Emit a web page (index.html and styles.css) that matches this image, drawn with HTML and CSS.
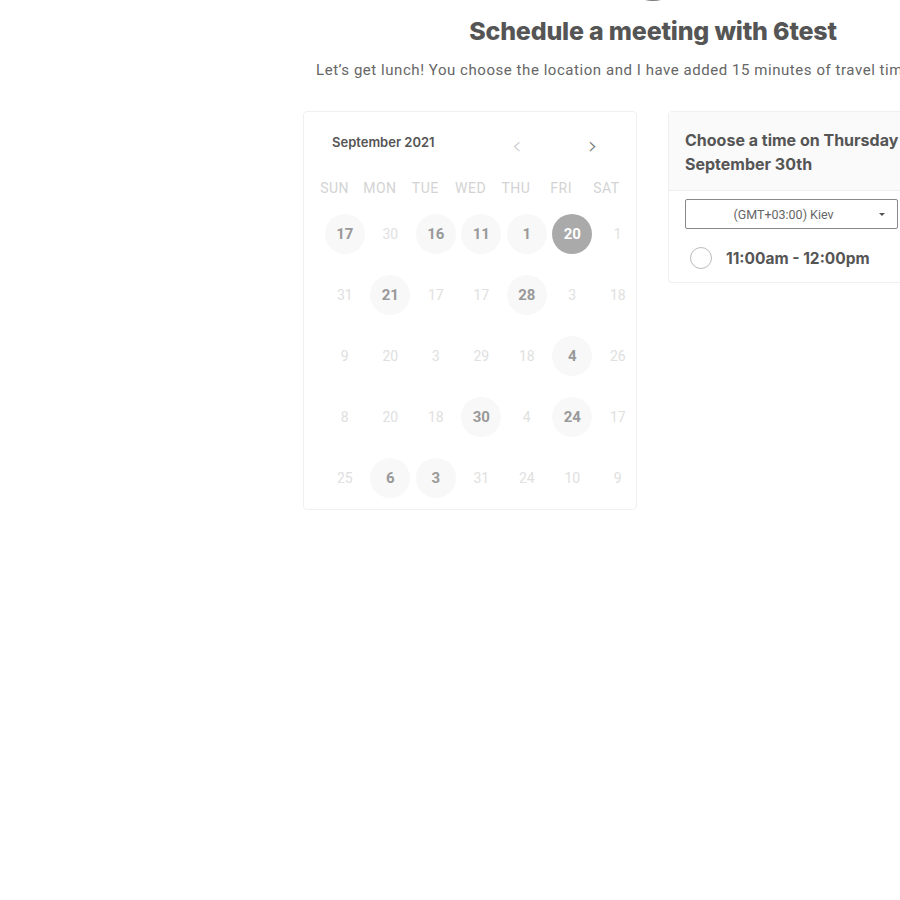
FILE: index.html
```html
<!DOCTYPE html>
<html>
<head>
<meta charset="utf-8">
<link rel="stylesheet" href="styles.css">
</head>
<body>
<div class="page">
  <div class="container">
    <div class="avatar"></div>
    <h1 class="title">Schedule a meeting with 6test</h1>
    <p class="subtitle">Let’s get lunch! You choose the location and I have added 15 minutes of travel time</p>
    <div class="panels">
      <div class="calendar">
        <div class="cal-head">
          <span class="month">September 2021</span>
          <span class="nav prev">&lsaquo;</span>
          <span class="nav next">&rsaquo;</span>
        </div>
        <div class="weekdays">
          <span>SUN</span><span>MON</span><span>TUE</span><span>WED</span><span>THU</span><span>FRI</span><span>SAT</span>
        </div>
        <div class="days">
          <span class="day on">17</span><span class="day">30</span><span class="day on">16</span><span class="day on">11</span><span class="day on">1</span><span class="day sel">20</span><span class="day">1</span>
          <span class="day">31</span><span class="day on">21</span><span class="day">17</span><span class="day">17</span><span class="day on">28</span><span class="day">3</span><span class="day">18</span>
          <span class="day">9</span><span class="day">20</span><span class="day">3</span><span class="day">29</span><span class="day">18</span><span class="day on">4</span><span class="day">26</span>
          <span class="day">8</span><span class="day">20</span><span class="day">18</span><span class="day on">30</span><span class="day">4</span><span class="day on">24</span><span class="day">17</span>
          <span class="day">25</span><span class="day on">6</span><span class="day on">3</span><span class="day">31</span><span class="day">24</span><span class="day">10</span><span class="day">9</span>
        </div>
      </div>
      <div class="times">
        <div class="times-head">Choose a time on Thursday<br>September 30th</div>
        <div class="times-body">
          <div class="select"><span class="select-text">(GMT+03:00) Kiev</span><span class="caret"></span></div>
          <label class="slot"><span class="radio"></span><span class="slot-text">11:00am - 12:00pm</span></label>
        </div>
      </div>
    </div>
  </div>
</div>
</body>
</html>
```

FILE: styles.css
```css
html, body {
  margin: 0;
  padding: 0;
  background: #fff;
  overflow: hidden;
}
body {
  font-family: Roboto, "Liberation Sans", sans-serif;
  color: #555;
}
.page {
  padding-left: 303px;
}
.container {
  width: 700px;
  display: flex;
  flex-direction: column;
  align-items: center;
}
.avatar {
  width: 60px;
  height: 60px;
  border-radius: 50%;
  margin-top: -59px;
  background: #e6e6e6;
  border: 2px solid #7a7a7a;
  box-sizing: border-box;
}
.title {
  margin: 16px 0 0;
  font-family: Inter, "Liberation Sans", sans-serif;
  font-weight: 800;
  font-size: 25px;
  line-height: 28px;
  color: #555;
  letter-spacing: -0.2px;
}
.subtitle {
  align-self: flex-start;
  margin: 15px 0 0 13px;
  font-size: 15px;
  line-height: 20px;
  letter-spacing: 0.55px;
  color: #666;
  white-space: nowrap;
}
.panels {
  align-self: stretch;
  display: flex;
  gap: 31px;
  margin-top: 31px;
  align-items: flex-start;
}
.calendar {
  width: 334px;
  height: 399px;
  box-sizing: border-box;
  border: 1px solid #f0f0f0;
  border-radius: 4px;
  position: relative;
}
.cal-head {
  display: flex;
  align-items: center;
  height: 62px;
  padding-left: 28px;
  position: relative;
}
.month {
  font-family: Inter, "Liberation Sans", sans-serif;
  font-weight: 600;
  font-size: 13px;
  color: #555;
  margin-top: -2px;
}
.nav {
  position: absolute;
  top: 22px;
  font-size: 24px;
  line-height: 24px;
  font-family: "DejaVu Sans", sans-serif;
  font-weight: 300;
}
.prev { left: 208px; color: #ccc; }
.next { left: 284px; color: #777; }
.weekdays {
  display: grid;
  grid-template-columns: repeat(7, 45.3px);
  margin-left: 8px;
  height: 28px;
  align-items: center;
  font-size: 14px;
  color: #d3d3d3;
  letter-spacing: 0.5px;
}
.weekdays span {
  text-align: center;
}
.days {
  display: grid;
  grid-template-columns: repeat(7, 45.5px);
  grid-auto-rows: 61px;
  margin-left: 18px;
  margin-top: 1px;
}
.day {
  display: flex;
  align-items: center;
  justify-content: center;
  justify-self: center;
  align-self: center;
  width: 40px;
  height: 40px;
  border-radius: 50%;
  font-size: 14px;
  color: #e0e0e0;
}
.day.on {
  background: #f8f8f8;
  color: #999;
  font-weight: 700;
  font-size: 15px;
}
.day.sel {
  background: #aaa;
  color: #fff;
  font-weight: 700;
  font-size: 15px;
}
.times {
  width: 335px;
  flex: none;
  box-sizing: border-box;
  border: 1px solid #efefef;
  border-radius: 4px;
}
.times-head {
  background: #fafafa;
  border-bottom: 1px solid #eee;
  padding: 16px 16px 14px;
  font-family: Inter, "Liberation Sans", sans-serif;
  font-weight: 700;
  font-size: 16px;
  line-height: 24px;
  color: #555;
}
.times-body {
  padding: 8px 16px 0;
  height: 91px;
  box-sizing: border-box;
}
.select {
  width: 213px;
  height: 30px;
  box-sizing: border-box;
  border: 1px solid #888;
  border-radius: 2px;
  display: flex;
  align-items: center;
  position: relative;
}
.select-text {
  width: 195px;
  text-align: center;
  font-size: 12.5px;
  color: #666;
}
.caret {
  width: 0;
  height: 0;
  border-left: 3px solid transparent;
  border-right: 3px solid transparent;
  border-top: 3px solid #555;
  margin-left: -2px;
}
.slot {
  display: flex;
  align-items: center;
  margin-top: 18px;
  margin-left: 5px;
}
.radio {
  width: 22px;
  height: 22px;
  box-sizing: border-box;
  border: 1px solid #bbb;
  border-radius: 50%;
}
.slot-text {
  margin-left: 14px;
  font-family: Inter, "Liberation Sans", sans-serif;
  font-weight: 700;
  font-size: 15.5px;
  color: #555;
}
```
